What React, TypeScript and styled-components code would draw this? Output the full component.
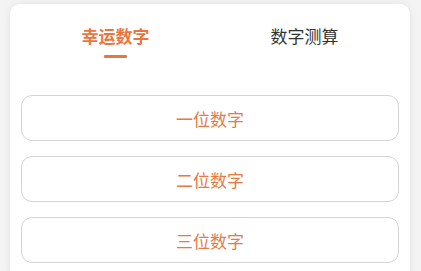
import React, { useState } from "react";
import styled, { createGlobalStyle } from "styled-components";

const Global = createGlobalStyle`
  html, body {
    margin: 0;
    padding: 0;
    background: #f4f4f4;
    overflow: hidden;
  }
  body {
    font-family: "Noto Sans CJK SC", "Noto Sans", sans-serif;
  }
`;

const Page = styled.div`
  padding: 4px 11px 0 10px;
  height: 271px;
  box-sizing: border-box;
  overflow: hidden;
`;

const Card = styled.div`
  background: #ffffff;
  border-radius: 10px;
  box-shadow: 0 0 8px rgba(0, 0, 0, 0.08);
  padding: 19px 11px 0;
  height: calc(100% + 12px);
  box-sizing: border-box;
`;

const Tabs = styled.div`
  display: grid;
  grid-template-columns: 1fr 1fr;
`;

const Tab = styled.div<{ $active?: boolean }>`
  display: flex;
  flex-direction: column;
  align-items: center;
  font-size: 17px;
  line-height: 26px;
  font-weight: ${(p) => (p.$active ? 700 : 400)};
  color: ${(p) => (p.$active ? "#e9763f" : "#333333")};
  cursor: pointer;
`;

const Underline = styled.div<{ $active?: boolean }>`
  margin-top: 6px;
  width: 23px;
  height: 3px;
  border-radius: 1px;
  background: ${(p) => (p.$active ? "#e9763f" : "transparent")};
`;

const List = styled.div`
  margin-top: 37px;
  display: flex;
  flex-direction: column;
  gap: 15px;
`;

const OptionButton = styled.div`
  height: 46px;
  box-sizing: border-box;
  border: 1.5px solid #d4d4d4;
  border-radius: 11px;
  display: flex;
  align-items: center;
  justify-content: center;
  font-size: 17px;
  color: #e47a48;
`;

export default function App() {
  const [active, setActive] = useState(0);
  const tabs = ["幸运数字", "数字测算"];
  const options = ["一位数字", "二位数字", "三位数字"];
  return (
    <>
      <Global />
      <Page>
        <Card>
          <Tabs>
            {tabs.map((t, i) => (
              <Tab key={t} $active={i === active} onClick={() => setActive(i)}>
                {t}
                <Underline $active={i === active} />
              </Tab>
            ))}
          </Tabs>
          <List>
            {options.map((o) => (
              <OptionButton key={o}>{o}</OptionButton>
            ))}
          </List>
        </Card>
      </Page>
    </>
  );
}
